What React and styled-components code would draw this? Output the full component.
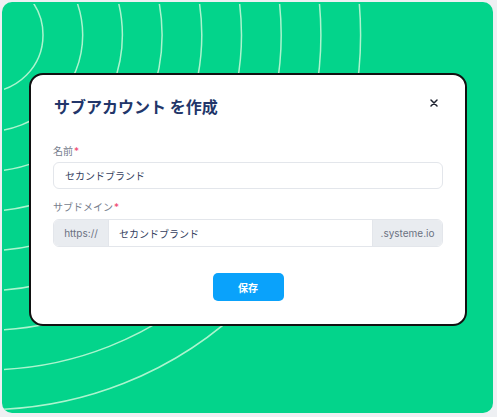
import React from "react";
import styled, { createGlobalStyle } from "styled-components";

const GlobalStyle = createGlobalStyle`
  html, body {
    margin: 0;
    padding: 0;
    background: #eef0f3;
  }
  * {
    box-sizing: border-box;
  }
`;

const FONT = `Inter, "Noto Sans CJK JP", "Noto Sans", sans-serif`;

const Arcs = () => {
  const radii = Array.from({ length: 9 }, (_, i) => 57 + i * 39.7);
  return (
    <ArcLayer width="491" height="411" viewBox="0 0 491 411">
      {radii.map((r) => (
        <circle
          key={r}
          cx={-18}
          cy={31}
          r={r}
          fill="none"
          stroke="rgba(228, 255, 228, 0.75)"
          strokeWidth="1.5"
        />
      ))}
    </ArcLayer>
  );
};

const App = () => {
  return (
    <>
      <GlobalStyle />
      <Page>
        <Panel>
          <Arcs />
          <Modal>
            <Header>
              <Title>サブアカウント を作成</Title>
              <CloseButton aria-label="close">
                <svg width="8" height="8" viewBox="0 0 8 8">
                  <path
                    d="M1 1 L7 7 M7 1 L1 7"
                    stroke="#1f2330"
                    strokeWidth="1.5"
                    strokeLinecap="round"
                  />
                </svg>
              </CloseButton>
            </Header>
            <Field>
              <Label>
                名前<Required>*</Required>
              </Label>
              <TextInput>セカンドブランド</TextInput>
            </Field>
            <Field gap="6px">
              <Label>
                サブドメイン<Required>*</Required>
              </Label>
              <InputGroup>
                <Addon width="55px" side="left">https://</Addon>
                <GroupText>セカンドブランド</GroupText>
                <Addon width="70px" side="right">.systeme.io</Addon>
              </InputGroup>
            </Field>
            <Footer>
              <SaveButton>保存</SaveButton>
            </Footer>
          </Modal>
        </Panel>
      </Page>
    </>
  );
};

export default App;

const Page = styled.div`
  width: 497px;
  height: 417px;
  padding: 2px;
`;

const Panel = styled.div`
  position: relative;
  width: 491px;
  height: 411px;
  background: #03d48b;
  border-radius: 10px;
  overflow: hidden;
  display: flex;
  justify-content: center;
  align-items: flex-start;
  padding: 71px 0 0 1px;
`;

const ArcLayer = styled.svg`
  position: absolute;
  left: 2px;
  top: 2px;
`;

const Modal = styled.div`
  position: relative;
  width: 438px;
  height: 253px;
  background: #ffffff;
  border: 2px solid #111111;
  border-radius: 14px;
  padding: 21px 22px 0 22px;
  display: flex;
  flex-direction: column;
  font-family: ${FONT};
`;

const Header = styled.div`
  display: flex;
  justify-content: space-between;
  align-items: center;
  height: 22px;
  margin-bottom: 27px;
`;

const Title = styled.div`
  font-size: 16px;
  font-weight: 700;
  color: #22366a;
  line-height: 22px;
  padding-left: 1px;
`;

const CloseButton = styled.div`
  display: flex;
  align-items: center;
  justify-content: center;
  width: 12px;
  height: 12px;
  margin-right: 3px;
  margin-top: -8px;
`;

const Field = styled.div`
  display: flex;
  flex-direction: column;
  gap: ${(props) => props.gap || "5px"};
  margin-bottom: 12px;
`;

const Label = styled.div`
  font-size: 10px;
  line-height: 12px;
  color: #767d8d;
`;

const Required = styled.span`
  color: #f0436a;
  margin-left: 1px;
`;

const TextInput = styled.div`
  height: 27px;
  border: 1px solid #e3e6eb;
  border-radius: 6px;
  padding: 0 11px;
  display: flex;
  align-items: center;
  font-size: 10px;
  color: #343e5e;
`;

const InputGroup = styled.div`
  height: 28px;
  display: flex;
  border: 1px solid #e3e6eb;
  border-radius: 6px;
  overflow: hidden;
`;

const Addon = styled.div`
  width: ${(props) => props.width};
  flex-shrink: 0;
  background: #e9ecf0;
  display: flex;
  align-items: center;
  justify-content: center;
  font-size: 10px;
  color: #6b7282;
  border-${(props) => (props.side === "left" ? "right" : "left")}: 1px solid #e3e6eb;
`;

const GroupText = styled.div`
  flex: 1;
  display: flex;
  align-items: center;
  padding: 0 10px;
  font-size: 10px;
  color: #343e5e;
`;

const Footer = styled.div`
  display: flex;
  justify-content: center;
  margin-top: 14px;
`;

const SaveButton = styled.div`
  width: 71px;
  height: 28px;
  border-radius: 5px;
  background: #0aa2fb;
  color: #ffffff;
  font-size: 10px;
  font-weight: 700;
  display: flex;
  align-items: center;
  justify-content: center;
`;
